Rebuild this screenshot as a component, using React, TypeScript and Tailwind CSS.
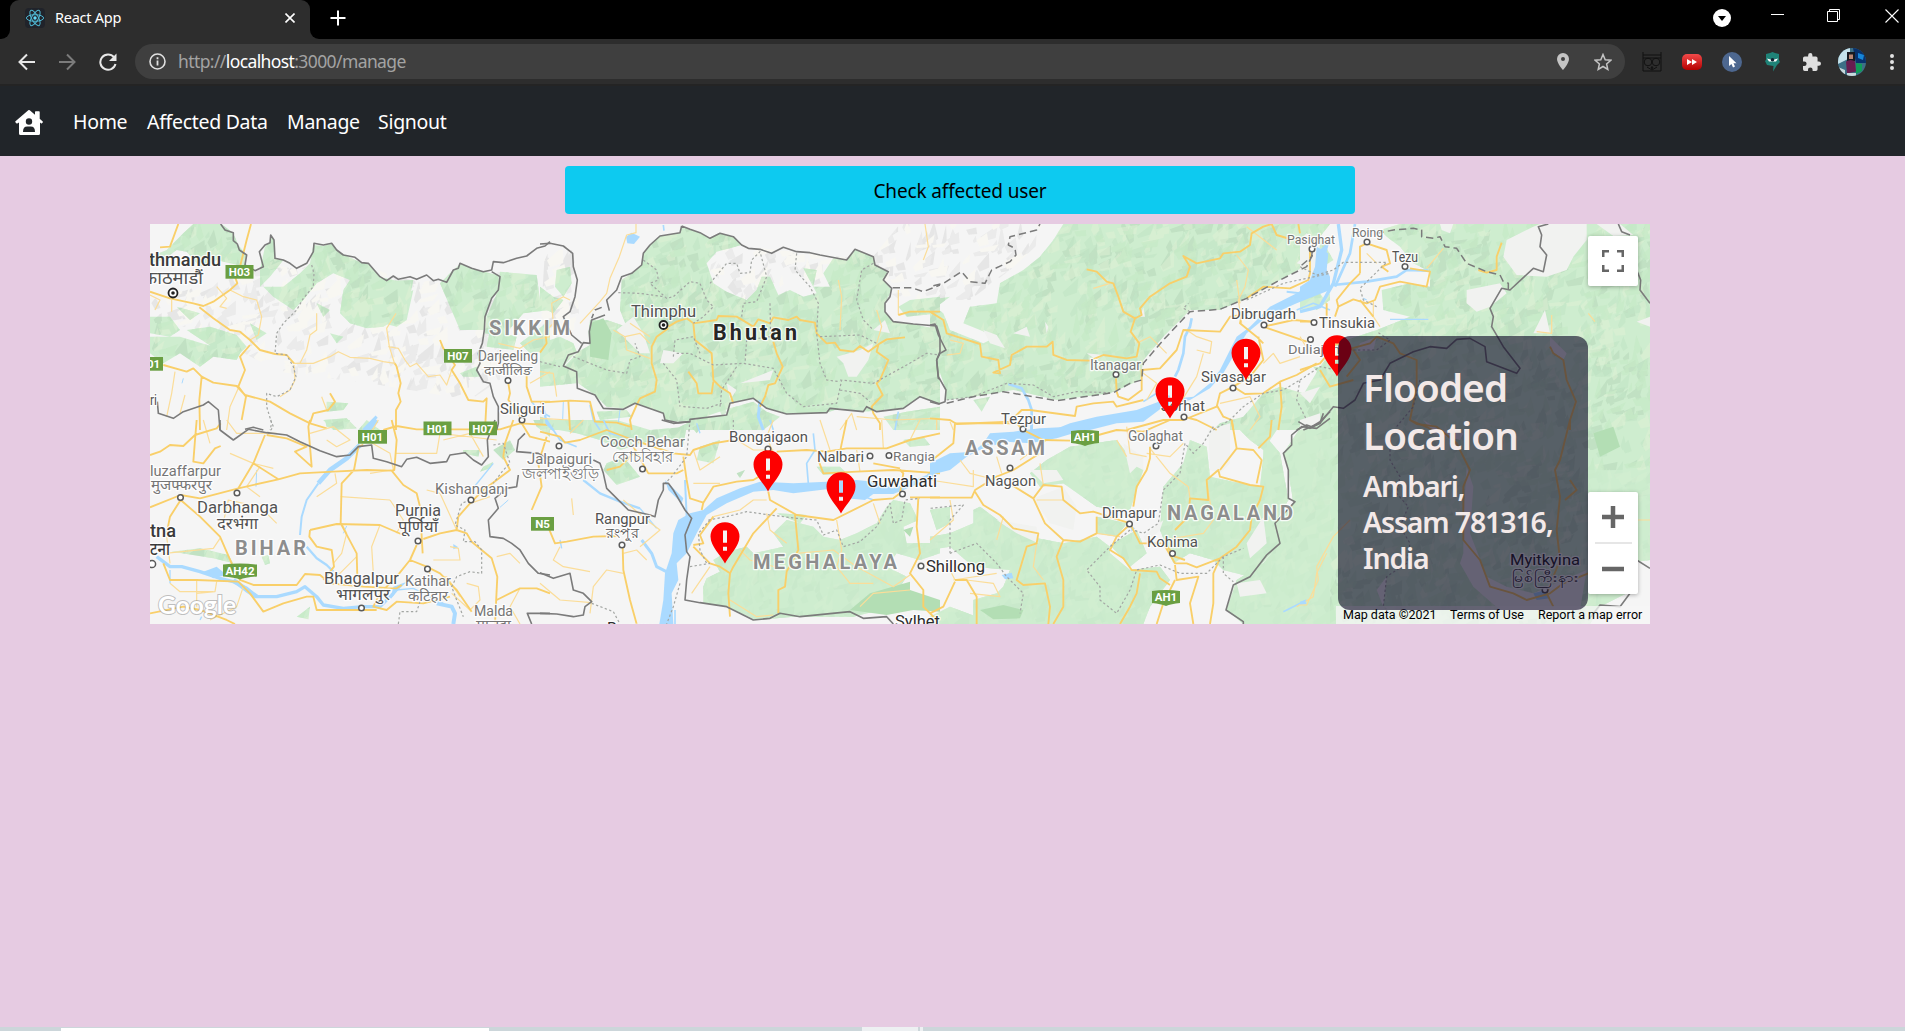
import React from "react";

type Tile = {
  x: number;
  y: number;
  green: string[];
  dark?: string[];
  pale?: string[];
  lake?: string[];
  stream?: [string, number][];
  road: string[];
  lane: string[];
  border: string[];
  dashed?: string[];
  dotted: string[];
};

// Every tile is drawn at three units per map pixel.
const tiles: Tile[] = [
  {
    x: 150, y: 220,
    green: [
      "M0 110L50 90 100 40 130 12H215L250 40 265 75 290 105 285 140 240 130 200 120 150 140 110 95 80 90 40 120 0 130z",
      "M0 290L60 290 90 330 60 350 0 340zM80 260L150 280 120 300zM110 330L180 320 260 345 290 380 270 400 200 390zM0 350L90 350 190 380 270 400 260 420 190 410 150 440 90 400 40 430 0 400z",
      "M330 150L345 80 360 68 362 50 372 60 375 115 400 120 360 170 330 200z",
      "M480 130L490 75 520 78 545 72 560 92 590 108 635 128 655 130 690 172 740 182 790 180 780 230 750 290 700 320 650 325 600 310 570 280 580 210 600 180 550 160 500 190 460 240 430 270 370 230 340 200 400 200 450 160z",
      "M790 210L770 300 740 320 700 310 720 250zM870 190L900 160 930 132 1000 155 1045 165 1048 210 1020 240 1000 330 930 330 900 260z",
      "M1050 155L1160 165 1170 240 1200 250V270L1120 280 1060 350 1005 340 1010 290 1045 210z",
      "M530 545L595 550 580 570 530 575zM520 600L590 595 620 625 550 630zM625 630L650 600 690 630zM1020 330L1100 350 1090 390 1010 380zM930 460L980 440 990 470 940 470zM1110 370L1200 300V390L1140 400z",
      "M500 250L540 270 520 290zM540 340L580 350 560 370zM300 310L350 340 320 360z",
    ],
    stream: [["M100 475L96 490", 3], ["M680 590L640 630", 9], ["M1145 545L1165 570 1200 590", 5]],
    road: [
      "M0 215L60 235 130 250 160 258 190 245 240 210 262 190 255 170 270 140 290 60 303 12",
      "M30 82L60 80 85 12",
      "M148 262L190 295 240 330 270 335 300 360 330 390 375 402 410 405 432 430",
      "M735 430L740 440 752 490 745 520 752 545 738 570V630",
      "M40 435L110 455 130 445 155 470 190 488 260 498 285 525 360 545 420 580 480 610 530 625",
      "M300 375L270 410 285 450 265 500 288 530 275 600",
      "M870 360L880 385 915 435 905 450 930 490 955 540 1000 545 1010 535 1005 630",
      "M155 470L148 540 150 630", "M480 610L490 580 535 570 555 545 540 520",
      "M1075 490L1080 520 1075 540 1100 570 1115 600", "M1130 460V500L1145 545H1200",
      "M700 630L740 618 800 628H1050L1110 610 1200 615",
    ],
    lane: [
      "M240 210L280 230 320 240 335 290 325 345 300 360", "M0 225L30 240 15 270", "M65 240V275", "M200 200L230 235 210 260 230 265",
      "M500 280V330L480 345 470 390 450 430", "M432 430L490 430 540 410 565 395 600 412 660 415 700 425 735 430",
      "M738 280L710 325 718 380 735 435", "M715 380L745 385 765 420 780 440 800 430 835 470 870 465 890 495 905 450",
      "M75 455L65 520 50 590", "M265 505L240 560 230 630", "M1045 370L1110 385 1150 360 1200 350", "M432 435L435 480 420 510 390 530",
      "M105 525L90 580", "M515 530L530 570", "M1140 490L1200 455",
    ],
    border: [
      "M212 12L225 30 250 38 250 62 262 72 268 90 290 105 285 135 315 152 340 140 328 95 345 75 360 68 362 45 372 60 375 115 400 120 420 130 440 145 470 130 490 95 492 70 520 75 545 70 560 90 580 105 615 112 635 128 655 130 690 170 710 182 730 168 745 178 780 170 800 178 830 165 850 182 865 178 890 187 910 150 925 145 930 130 965 145 1000 155 1025 150 1030 125 1060 128 1100 115 1130 108 1160 85 1185 78 1200 65",
      "M1025 155L1050 170 1045 210 1025 235 1005 290 1003 330 997 370 985 400 990 430 980 450 1000 485 1020 490 1030 530 1045 560 1045 610 1040 630",
      "M22 545L25 580 70 595 100 575 160 555 175 545 205 570 210 630", "M285 628L310 622 340 630",
    ],
    dotted: ["M485 135L492 160 490 200 460 235 440 270 400 310 380 340 375 400 410 405 430 440 438 470 420 510 380 530 350 520 350 560 365 610 360 630"],
  },
  {
    x: 150, y: 420,
    green: [
      "M65 395L150 385 235 405 250 430 190 415 110 402z", "M335 410L355 405 360 430 345 435z", "M440 590L480 560 475 598z",
      "M525 0H600L580 25 530 20zM940 90L990 90 985 110 940 100zM1030 90L1080 60 1095 90 1060 120zM1000 140L1030 125 1020 145 990 155zM1150 0H1200V50L1160 20z",
    ],
    lake: ["M910 372L925 382 910 388z", "M160 455L200 440 230 465 190 475z", "M720 540L730 500 770 485 745 510z"],
    stream: [
      ["M680 0L655 25 640 50", 16], ["M630 75L590 115 540 150 505 190", 14], ["M505 190L470 240 455 290 450 345", 6],
      ["M470 380L500 415 530 435 550 455", 7], ["M20 410L60 440 95 440 150 455 210 475 250 485 290 505 320 530 380 530 440 515 465 500 500 530 520 555 580 565 640 560 690 560 730 520", 10],
      ["M250 480L290 510 320 530", 14], ["M860 550L905 560 915 580 910 612", 12], ["M320 150L318 200", 3], ["M1030 130L965 210", 4], ["M1075 240L1050 262", 3],
      ["M590 318L580 340", 3], ["M60 450V490", 4], ["M740 510L790 505 880 550", 4], ["M150 600L155 590", 4],
    ],
    road: [
      "M0 105L30 95 60 75 100 78 135 45 200 25 212 10", "M140 0L135 60 130 125 160 130 195 85 212 78",
      "M345 45L310 130 265 205 150 235 92 225 0 262", "M350 45L410 55 470 80 435 95 485 140 475 20 480 0",
      "M310 130L385 178 450 160 550 155 650 150 725 152", "M385 178L265 205",
      "M640 75L625 80 612 150 575 190 572 310 620 400 622 470", "M725 0L740 60 733 150 725 152 760 195 800 220 810 260 818 400",
      "M92 240L60 290 50 340", "M92 240L150 290 210 350 245 430 270 480 310 495 440 495 465 462 510 465 540 490 640 500 740 505 755 495",
      "M480 330L560 312 690 315 760 345", "M480 330L478 350 500 380 545 390 552 440 520 480",
      "M820 357L870 340 920 330 925 290 960 250 1000 210 1080 150 1060 110 1065 70 1090 0",
      "M920 330L950 340 965 365 1025 415 1042 470 1035 612", "M800 375L780 420 740 470 690 520 670 560 710 570 740 545 820 550 900 530",
      "M780 420L830 440 870 460 920 510 965 575", "M40 430L60 480 140 480 265 485 300 520 340 575 400 550 470 530 490 530 500 570 620 570 680 570",
      "M0 580L100 560 150 570 230 600 255 612", "M1145 270L1175 200 1165 130 1190 50", "M1040 540L1110 505 1160 505 1200 520", "M1115 10L1140 50 1200 65",
    ],
    lane: [
      "M45 400L190 385 210 355", "M200 485L195 515 140 520", "M140 480V560", "M60 490L90 515 190 515", "M50 350L60 430", "M160 0L180 70", "M240 100L310 130 370 145",
      "M215 330L235 240 325 260 350 280 380 310", "M500 230L560 190 555 160", "M572 230L720 240", "M575 310L590 340 575 400 550 430", "M685 0L650 60 720 100 730 150", "M735 100H860L870 40 1040 60",
      "M690 315L665 380 670 460", "M660 160L725 150", "M850 420L930 420 925 385 900 380", "M920 330L870 220 830 210", "M880 60L960 40 1000 110", "M960 250L1020 230",
      "M280 500L260 560 180 600", "M1040 410L1080 400 1110 430", "M950 490L985 500 990 540 960 570 905 520", "M1110 505L1080 560 1110 612", "M830 440L850 480 890 470 930 530",
      "M480 40L550 20 600 60 560 80 530 60", "M330 140L290 200 330 230", "M720 240L760 300 740 340", "M620 410L560 470", "M230 0L260 40 380 40",
    ],
    border: [
      "M210 0V30L250 60 295 28 350 38 410 45 450 65 510 92 560 110 600 105 625 80 665 75 670 115 710 125 755 140 770 118 800 112 840 130 890 125 900 105 945 98 970 120 995 135 1015 110 1012 60 1035 0",
      "M1125 40L1105 60 1100 95 1165 100 1200 120", "M1105 165L1100 200 1070 205 1035 235 1045 265 1015 300 1020 350 1060 355 1085 370 1110 390 1135 430 1165 460 1200 465", "M1145 612L1132 580 1200 580",
    ],
    dotted: [
      "M960 240L935 250 915 315 945 330 940 365 975 365 995 390 995 460 960 455 920 470 905 500 920 540 940 590",
      "M745 612L750 575 800 575 810 545", "M1030 75L1060 70 1080 130 1060 150 1030 190", "M362 0L370 20 355 40",
    ],
  },
  {
    x: 540, y: 220,
    green: [
      "M425 20L420 38 360 48 330 75 310 100 305 135 275 160 245 180 240 270 260 320 200 300 150 300 145 340 150 375 115 395 75 438 110 460 115 490 165 525 200 560 250 565 285 550 370 580 375 600 415 605 560 585 570 550 640 535 680 565 740 582 860 578 900 565 970 575 1090 565 1140 530 1200 552V330L1120 312 1060 305 1035 275 1035 250 1055 210 1030 180 1045 155 1005 135 1000 110 945 88 920 120 880 115 850 160 870 200 820 200 830 150 790 145 830 220 790 230 750 210 715 225 690 170 665 170 650 210 620 240 560 215 520 190 500 130 530 95 605 75 580 50 540 40 510 55 480 38z",
      "M50 150L90 140 95 190 70 230 45 200zM0 200L40 230 70 240 40 280 0 260zM0 370L60 350 100 370 110 395 70 438 110 460V490L0 500z",
      "M450 605L570 565 640 545 680 575 720 590 670 630H400z", "M1030 590L1100 575 1200 560V630H1060zM170 575L260 570 275 590 180 600zM0 590L40 600 80 630H0z", "M1075 260L1110 240 1200 230V280L1100 290z",
    ],
    dark: ["M150 310L190 295 215 340 205 420 150 410z"],
    pale: ["M890 410L960 390 1000 370 985 420 950 470 925 470 910 430z", "M280 290L310 340 330 400 300 400 230 330z", "M370 390L430 400 400 430 360 430z", "M560 490L590 510 570 540zM1000 330L1035 300 1050 340zM600 490L700 450 690 480z"],
    lake: ["M258 50L275 38 300 50 282 72 262 70z"],
    stream: [["M370 15L372 32", 5], ["M660 540L655 590 670 630", 9], ["M150 555L160 600 180 630", 5], ["M12 570L20 610 40 630", 7], ["M70 545L68 600", 3], ["M1075 575L1065 630", 5], ["M240 570L235 610", 3], ["M690 600L700 630", 5]],
    road: [
      "M385 320L410 305 440 295 460 310 530 300 535 288 590 290 640 320 655 298 690 310 700 292 745 300 770 290 780 300 825 308 830 340 860 370 885 368 900 390 940 395 960 378 985 395 1020 370 1040 358 1095 352",
      "M385 325L350 350 335 380 335 430 350 480 345 515 300 535 290 555 270 600 275 630", "M460 310L465 360 515 400 520 480 540 500 570 520 580 550",
      "M445 455L470 490 475 520 515 520 520 485", "M700 365L710 400 728 440 705 490 685 495 675 530 660 560", "M1015 375L1010 395 1045 420 1020 480 1010 490 1028 525 995 560 1000 580 1020 610V630",
      "M0 398L20 370 15 330", "M0 548L90 542 150 545 165 605 230 608 270 620", "M85 542L90 630",
      "M1075 285L1110 275 1200 275",
    ],
    lane: [
      "M288 12V38L260 45 238 110 210 175 200 220 180 245 120 310", "M1155 12L1165 80 1150 120", "M220 330L255 350 260 390 330 415", "M255 350L300 340 330 370", "M0 455L40 460 50 530",
      "M900 330L905 230 895 180", "M1010 270L1025 320 1010 370", "M20 330L40 310 35 250 70 230 90 240", "M1075 285V210", "M270 310L330 350", "M900 630L935 580 950 630", "M950 590L1060 600 1190 595V630", "M0 595L90 600", "M730 440L720 460",
    ],
    border: [
      "M425 18L450 28 480 38 510 55 540 40 580 50 605 75 625 85 660 88 695 100 730 82 770 95 810 98 840 105 920 120 945 88 1000 110 1005 135 1045 155 1030 180 1055 205 1050 230 1035 250 1035 275 1060 305 1120 312 1190 318 1200 350 1200 395 1190 420 1195 475 1200 478",
      "M425 18L420 38 360 48 330 75 310 100 305 135 275 160 245 170 230 210 200 240 208 272",
      "M195 285L155 300 148 335 150 370 130 368 115 395 85 405 70 438 110 455 112 505 165 525 190 565 250 568 285 550 370 580 375 600 415 608 450 605 450 598 560 585 570 550 640 535 680 565 740 582 860 578 870 565 970 575 980 560 1010 575 1090 565 1140 530 1200 552",
      "M0 72L30 70 70 78 98 100 100 140 112 180 105 230 90 275 70 290 95 345 125 370",
    ],
    dashed: ["M185 262L165 270 155 295", "M1058 203H1115L1150 215 1200 195"],
    dotted: [
      "M310 120L350 150 355 180 330 190 380 235 400 230 450 185 480 190 500 240 520 260 490 290 460 310", "M235 218L300 220 370 230", "M510 190L560 130 590 130 600 160 630 158 635 120 660 95 680 170 650 245 610 250 605 290",
      "M770 100L765 150 810 200 835 250 830 340 840 430 860 480 900 485", "M1000 130L965 150 950 240 970 300 1000 330", "M100 410L200 450 260 460 270 420 300 410 285 370", "M370 430L410 480 420 560",
      "M400 410L405 360 460 350 480 400", "M410 400L450 400 520 435 610 430 700 445 740 520 790 560 890 550 905 480", "M690 350L620 360 615 430", "M840 350L960 345 1010 370", "M900 480L1000 490 1100 435 1160 400 1200 405", "M900 510L960 520 990 545", "M0 425L60 440", "M690 250L692 360", "M540 560L545 510 590 440", "M580 600 L580 630", "M430 560L500 565 545 550",
    ],
  },
  {
    x: 540, y: 420,
    green: [
      "M500 475L540 455 520 420 560 395 620 380 640 400 730 380 700 340 740 300 820 320 850 350 900 360 950 340 1010 310 1040 260 1060 240 1110 250 1135 300 1090 320 1100 370 1200 370V400L1140 420 1070 400 1040 440 1100 470 1080 500 1020 570 940 590 760 590 650 600 560 560 490 550 490 500z",
      "M0 0H230L330 30 440 20 430 75 400 80 370 50 240 90 180 60 110 40 0 20z", "M200 130L250 110 300 170 230 195 190 150z", "M480 80L540 60 520 130 470 120zM590 160L615 150 600 175zM830 140L900 140 920 160 850 165zM440 0H500L470 40z", "M1090 60L1150 50 1170 75 1110 80zM710 280L800 285 780 310z",
    ],
    dark: ["M930 570L990 520 1110 485 1110 510 1200 540V575L1120 570 1040 585z", "M1090 330L1120 320 1110 350z"],
    lake: [
      "M1200 120L1160 165 1060 205 1000 185 950 180 860 185 760 190 660 185 600 205 530 235 490 270 450 280 415 300 400 340 395 400 375 460 370 540 358 612H400L395 520 415 480 410 430 440 400 470 340 500 285 560 250 640 215 700 210 760 220 860 208 920 235 975 240 1000 222 1060 222 1150 185 1200 160z",
      "M375 180L430 235 425 250 385 210z",
    ],
    stream: [
      ["M130 180L180 220 240 245 300 265", 7], ["M305 360L335 400 350 440 385 458", 9], ["M435 180L440 290", 6], ["M820 40L825 90 800 130 805 190", 5], ["M20 0L60 60 110 80", 5], ["M190 0L210 40 290 60", 5],
      ["M300 265L350 325", 4], ["M60 360L65 385", 4], ["M470 10L480 40", 4], ["M900 230L960 225 1000 240", 5], ["M405 570V612", 5],
    ],
    road: [
      "M20 310L45 370 80 365 160 350 235 348", "M248 380L250 450 270 540 290 612", "M0 35L60 50 75 68 120 60 200 30 280 60 400 100 450 105 460 90 520 70 580 60",
      "M280 80L325 160 410 160 430 150", "M430 110L440 180 450 235 490 248 520 200 590 185 640 180 690 150", "M490 248L485 270", "M685 215L690 240 770 285 880 300 1000 240 1060 235 1080 220 1090 160 1080 150",
      "M710 265L640 340 580 440 570 460 565 520 570 590", "M765 285L775 390 740 455 735 500 715 510V580", "M710 95L800 90 860 95 920 85 1040 85 1110 60 1200 40", "M900 95L920 0",
      "M835 120L850 160 950 155 1060 150 1200 160", "M1135 235L1130 320 1140 400 1110 460 1150 510 1150 560 1190 600", "M1110 232H1200", "M460 375L490 370 480 345 520 290", "M460 380L510 430 540 440 570 460",
      "M200 150L240 140 290 90", "M1000 130L1080 145",
    ],
    lane: [
      "M250 460L200 450 160 500 150 580", "M0 490L60 540 155 548", "M250 400L290 390 320 420", "M95 235L100 285", "M60 380L40 420 70 440 150 455", "M520 290L600 270 640 240 680 240", "M680 280L690 330 740 370", "M600 390L630 420 740 450",
      "M460 190L540 190", "M460 90L480 150 540 110", "M840 0L870 90", "M1025 0L1030 85", "M1110 60L1140 0", "M950 90L960 155", "M770 400L880 390 950 440 1060 500 1110 465", "M890 300L905 390 890 440 930 490 1000 490", "M1000 250L1020 310", "M1110 510L1000 520 960 560",
      "M455 520L510 440", "M570 540L650 590 700 585", "M250 240L320 300 360 330 300 380", "M590 60L640 90 700 90", "M700 100L680 50 700 0", "M90 40L130 0",
    ],
    border: [
      "M365 0L400 10 450 5", "M160 120L180 130 190 160 200 205 225 230 265 270 330 285 345 290 355 240 370 210 370 190 385 190 400 210 435 270 455 295 435 345 440 395 450 410 440 480 435 540 480 548 560 560 640 600 690 595 720 580 780 590 930 575 970 595 1040 590 1060 612",
      "M0 458L40 475 90 460 100 510 130 520 155 545 135 560 130 585 100 590 50 582 0 580",
    ],
    dotted: [
      "M505 300L560 290 620 275 690 285 770 295 830 300 850 345 890 330 910 380 960 365 1010 320 1050 250 1060 310 1085 300 1095 240 1140 235", "M420 490L400 560 380 612", "M155 550L220 575 240 612", "M450 440L510 430", "M450 0L440 110 395 170 375 190", "M510 300L475 340 480 390 500 430",
    ],
  },
  {
    x: 930, y: 220,
    green: [
      "M400 12H1110L1150 60 1140 130 1050 180 950 235 870 270 780 270 700 350 640 420 630 480 540 520 380 540 250 510 130 530 50 540 45 500 20 430 0 440V250L40 280 60 330 160 370 200 350 100 310 120 260 200 250 210 190 280 150 330 110 370 60z",
      "M1200 445L1150 440 1180 480 1120 520 1050 500 1000 520 940 590 870 610 850 630H1200z", "M130 540L180 530 155 575z", "M0 240L60 230 20 260zM1150 260L1200 220V240L1160 270z",
    ],
    pale: ["M160 330L200 345 225 385 180 370zM250 340L290 320 300 350zM345 305L355 320 350 340zM640 262L645 290 630 290z", "M1100 130L1140 90 1140 140zM470 400L520 405 500 420z"],
    lake: ["M1200 60L1170 90 1165 130 1175 170 1100 220 1060 240 1020 260 960 320 920 350 900 390 870 450 840 490 790 530 700 540 620 570 500 590 420 610 370 630H480L560 610 640 605 700 560 780 540 840 505 880 460 950 340 1010 290 1100 250 1200 210V170L1180 130z"],
    stream: [["M785 295L780 320 765 350 760 400 745 450 735 470", 8], ["M640 545L680 520 720 530", 5], ["M235 492L275 505 295 540 305 570V630", 8], ["M1200 270L1150 250 1100 270", 5], ["M1070 215L1110 220", 6]],
    road: [
      "M0 275L40 300 50 340 80 350 150 372 155 410 205 420 210 460 190 458 240 435 245 405 290 380 350 380 368 365 370 405 410 420 480 422 520 405 590 415 620 410 628 370 602 335 615 295 580 275 565 230 550 190 530 185 500 155 470 148",
      "M615 295L635 285 630 265 660 230 720 190 770 170 780 140 760 108 800 130 870 115 880 100 930 95 960 75 965 40 1000 20 1025 12 1040 45 1090 60", "M558 475L560 515",
      "M560 515L565 530 595 540 635 510 635 450 690 445 740 390 760 330 870 335 900 290 935 285", "M0 595L60 600 80 612 240 605 275 570 300 570 435 588 440 560 490 550 550 545 560 560 640 540", "M935 285L930 310 980 350 1000 370",
      "M1000 320L1090 300 1150 305", "M1000 320L1130 365", "M950 235L1000 200 1080 205 1135 180 1140 160V90", "M590 630L700 600 760 600 860 560 870 520 910 500 945 522 1000 520 1050 485 1100 465 1160 430", "M985 350L1000 420 960 470 910 500",
      "M860 555L880 590 905 600 910 630", "M1050 485L1055 560 1045 630", "M1190 250V300", "M1105 12L1110 40", "M760 590L800 600 860 630",
    ],
    lane: [
      "M490 205L540 190", "M920 105L955 150 945 200 925 240 935 310", "M620 370L660 350 710 400", "M770 330L800 350 845 365 840 400 800 390", "M60 360L100 370 90 400 50 405", "M60 605L70 630", "M820 400L800 470 750 550", "M1000 430L1030 400 1050 430 1110 410", "M870 550L960 530 990 590 960 630", "M640 460L680 490 650 540", "M950 20L1040 90", "M920 180L930 250",
    ],
    border: ["M0 315L15 312 25 345 48 390 30 400 20 420 25 470 48 510 45 545 25 552 0 545", "M1100 630L1130 615 1145 620 1170 605 1200 575"],
    dashed: [
      "M10 197L40 190 95 155 120 185 165 190 185 150 240 125 258 105 255 85 235 75 240 50 320 30 330 12", "M50 550L130 530 220 515 380 542 550 518 600 490 635 480 640 430 700 360 780 275 870 268 950 235 1050 180 1130 140 1150 100",
    ],
    dotted: ["M50 540L130 530 230 490 310 495 370 530 440 515 540 518", "M780 275L760 265 775 250", "M950 240L1060 190 1200 160", "M850 630L900 600 940 560 1000 520 1060 510 1110 480 1100 540 1130 600"],
  },
  {
    x: 930, y: 420,
    green: [
      "M300 160L350 120 420 80 560 60 600 110 640 150 600 270 560 270 500 260 400 190 330 200z",
      "M150 260L230 320 300 350 400 370 500 350 540 380 540 400 600 450 690 440 720 480 660 560 640 612H130V540L200 520 220 500 240 450 130 440 60 380 0 390V350L60 340 130 310 130 270z",
      "M780 60L830 80 840 170 930 190 990 200 1000 110 1000 40 1050 100 1075 240 1040 300 1050 370 960 470 880 450 850 420 780 400 730 430 690 330 700 200 760 130z", "M500 290L590 310 560 350 500 340z", "M900 0H1060L1000 90 960 60z",
      "M1060 100L1120 10 1200 0V612H940L890 570 920 480 1000 430 1050 370 1035 310 1090 250 1075 150z", "M540 375L620 330 650 400 600 440z", "M0 590L60 560 140 590V612H0z", "M0 270L60 260 60 310 20 330z",
    ],
    dark: ["M150 570L220 555 280 570 270 595 190 598z"],
    pale: ["M580 70L640 110 640 150 620 140 600 160zM300 150L380 150 400 180 340 190zM310 235L400 200 440 260 430 330 360 310zM920 490L990 480 1010 520 930 530z", "M640 350L700 300 690 330 650 370zM835 30L900 10 900 130 870 160 840 150zM950 370L1000 290 1010 370 960 415z", "M200 300L320 320 325 370 260 340z"],
    lake: ["M0 130L60 100 130 95 160 70 180 40 250 35 330 25 420 20 480 0H560L480 25 380 55 300 70 230 65 160 85 110 110 60 150 0 165z", "M215 465L245 458 250 475 225 478z", "M600 315L615 325 605 335z"],
    stream: [["M305 0V40", 8], ["M1130 540L1060 575", 5], ["M75 100L60 140", 4]],
    road: [
      "M75 10H260L280 30 300 40 340 60 420 62", "M505 45L560 30 640 35 720 0", "M75 10L70 70 0 125", "M0 233H125L135 210 200 170 250 150 330 100", "M135 215L160 255 210 285 250 325 325 340 320 370 290 380 260 480 280 495 345 490 360 560 355 612",
      "M245 195L310 235 340 195 395 200 400 240 450 280 490 275 600 310", "M310 235L345 310 400 360 380 410 400 480 400 560 370 612", "M400 360L450 365 500 340 500 290", "M660 80V115L650 150 620 200 610 260", "M598 315L560 350 540 390 580 415 605 450 680 455 690 475 720 495",
      "M605 320L630 370 700 370 735 430 770 430 800 442 870 415 920 380 960 330 965 290 990 240 1000 200 960 195 870 170 865 150 830 180 835 240 780 235 775 290 735 330", "M870 150L920 85 970 90 995 120 980 190", "M920 85L905 0", "M985 85L1020 50 1025 0",
      "M735 435L740 480 805 470 780 550 790 612", "M735 480L700 550 680 612", "M870 415L850 460V550L840 612", "M630 460L620 520 600 560 570 612", "M75 480L110 480 140 530 140 612", "M75 485L40 560 0 580", "M705 370L735 410 765 420",
    ],
    lane: [
      "M1190 400L1160 460 1150 530 1100 560", "M660 85L720 160 775 200 780 235", "M90 120L120 160 200 180", "M0 180L130 200 130 150", "M200 110L215 160", "M590 20L600 100 650 110", "M650 100L720 110 760 70", "M320 240L400 240", "M60 240L70 300 0 360", "M110 480L190 490 210 530 120 520", "M75 480L50 430", "M320 370L310 440 340 480", "M220 290L200 360", "M700 360L820 340 850 300 830 190", "M500 340L570 350", "M560 60L590 110", "M350 60L270 120", "M340 195L330 130", "M200 460L70 480",
    ],
    border: ["M1200 -5L1160 25 1115 20 1085 45 1085 75 1060 100 1075 150 1075 235 1095 245 1035 310 1050 370 1010 405 960 470 910 495 888 570 940 605V612"],
    dotted: [
      "M850 20L820 70 790 100 765 70 750 160 700 210 685 310 640 340 610 330", "M600 330L540 380 470 450 510 500 510 540 560 580 600 510 620 450 690 435 750 460 830 460 880 410 940 385", "M880 410V460L910 485", "M60 400V300L100 255 0 265", "M60 400L140 370 200 430 230 470 280 520 270 580",
    ],
  },
  {
    x: 1300, y: 220,
    green: [
      "M240 30L300 12H1050V630H0V540L60 440 110 370 230 330 330 290 250 270 245 210 330 190 390 200 390 155 340 130 300 80 260 50z", "M0 12H90L60 50 100 120 40 160 0 170z", "M0 230L60 220 80 250 0 270z",
    ],
    pale: [
      "M620 60L700 20 720 12H860V60L820 110 800 150 740 170 650 165 610 110z", "M500 210L600 190 620 220 570 260 530 275 500 250z", "M735 270L750 340 700 340z", "M890 12H960L1000 45 940 48z", "M1010 305L1050 290V320z", "M0 60L20 40 60 70 50 160 0 180z", "M420 12H460L450 40 425 30z",
      "M750 350L800 400 790 420 750 390z", "M180 370L230 350 220 390 170 395zM0 520L60 500 30 550z",
    ],
    lake: ["M50 80L85 100 80 150 60 200 0 240V200L30 180 45 140z"],
    stream: [["M115 12L125 90 100 190 60 260 0 275", 10], ["M165 12L150 100 105 200", 8], ["M100 195L200 185 290 170 320 150 385 152", 8], ["M270 298H385", 4], ["M190 235L200 240", 4]],
    road: [
      "M180 160V80L200 70 260 90 270 130 245 140 265 155", "M105 290L115 260 160 238 200 250 225 240 240 200 300 185 380 200 390 155 330 145", "M115 260L110 240 150 190 180 160", "M0 305L40 305", "M180 240L220 290", "M535 150L560 158 590 150 590 110 605 68",
      "M750 380L760 400 790 420 800 480 828 545 810 600V630", "M155 385L210 370 230 350 280 370 300 400 350 420 350 500 330 600 400 630", "M60 450L90 500 160 480", "M0 450L60 430 110 370", "M110 370L160 390 180 420 140 470",
    ],
    lane: ["M380 145L430 85", "M865 280L885 305", "M755 285L755 340 710 335", "M200 100L230 130", "M220 240V290L240 320", "M0 350L30 400"],
    border: [
      "M745 12L715 20 725 45 720 80 740 105 730 155 700 145 630 210 605 205 570 265 580 290 575 320 610 380 660 445 650 460 560 425 555 380 510 355 470 358 440 385 390 380 340 395 270 430 240 480 190 490 165 540 130 565 100 560 60 610 10 630", "M955 12L965 35 990 45", "M1010 150L1022 180 1020 210 1050 250",
    ],
    dashed: ["M230 40L280 30 340 25 365 30 365 50 400 55 420 50 435 80 470 85 500 130 560 155 600 165 610 185 625 190 625 210", "M40 60L35 110 0 140"],
    dotted: ["M0 140L50 165 100 150 130 127H260L180 205 190 240 230 260", "M0 480L60 440 110 450", "M160 390L230 390 270 360 230 335", "M360 480L340 560 290 620"],
  },
  {
    x: 1300, y: 420,
    green: ["M0 0H1050V420L1010 425 980 520 900 560 870 612H0z"],
    pale: ["M500 140L520 200 510 340 560 470 620 500 700 520 860 450 840 570H600L520 500 480 430 490 400 490 300z", "M0 30L60 10 60 -20 0 0z", "M370 0L420 30 490 40 480 60 400 40z", "M230 510L260 470 250 560z"],
    dark: ["M880 40L940 20 960 80 900 110z"],
    lake: ["M700 520L740 510 750 535 710 540z", "M0 545L15 540 20 552 0 555z"],
    road: ["M330 0L350 12 410 20 470 70 510 150 490 200 490 360 540 420 570 500 640 520 680 540 750 520 790 490 865 460", "M810 0L780 120 765 150 780 230 770 330 780 420 740 520", "M740 520L760 560", "M810 180L830 210 795 240"],
    lane: ["M150 300L100 350 50 440 55 480 20 555 0 555", "M1050 300H1010"],
    border: ["M1010 420L1050 445", "M865 600L900 555 960 560 990 520 1010 460", "M-5 5L30 25 60 10 70 -20"],
    dotted: ["M270 60V120L300 170 290 220 325 260 300 320 330 370 320 430 260 470 250 560 300 600"],
  },
];

type Label = [string, number, number, number, number, string?];

// text, left, baseline, width, size, tone
const labels: Label[] = [
  ["thmandu", 149, 266, 72, 18, "b"], ["काठमाडौं", 143, 284, 60, 17], ["ri", 150, 405, 7, 15], ["Darjeeling", 478, 361, 60, 15, "g"], ["दार्जीलिङ", 484, 375, 48, 13, "g"],
  ["Siliguri", 500, 414, 45, 15], ["luzaffarpur", 150, 476, 71, 15.5, "g"], ["मुजफ्फरपुर", 151, 490, 61, 14, "g"], ["Darbhanga", 197, 512.5, 81, 17], ["दरभंगा", 217, 528.5, 41, 16],
  ["tna", 150, 537, 26, 18, "b"], ["टना", 150, 555, 20, 17, "b"], ["Purnia", 395, 516, 46, 16.5], ["पूर्णियाँ", 398, 531.5, 40, 16], ["Kishanganj", 435, 494, 73, 15.5, "g"],
  ["Jalpaiguri", 527, 464, 65, 15, "g"], ["জলপাইগুড়ি", 522, 478.5, 77, 15, "g"], ["Bhagalpur", 324, 583.5, 75, 17], ["भागलपुर", 336, 599.5, 54, 16], ["Katihar", 405, 586, 46, 15.5, "g"], ["कटिहार", 408, 601, 40, 15, "g"],
  ["Malda", 474, 615.7, 39, 15.5, "g"], ["मालदा", 476, 630, 35, 14, "g"], ["Thimphu", 631, 316.7, 65, 16.5], ["Cooch Behar", 600, 447, 85, 15.5, "g"], ["কোচবিহার", 612, 462, 61, 15, "g"],
  ["Bongaigaon", 729, 442, 79, 15.5], ["Nalbari", 817, 461.5, 47, 15.5], ["Rangia", 893, 460.5, 42, 13.5, "g"], ["Guwahati", 867, 487, 70, 17, "k"], ["Rangpur", 595, 524, 55, 15.5], ["রংপুর", 606, 538, 33, 14],
  ["Shillong", 926, 572, 59, 17, "k"], ["Sylhet", 895, 627, 45, 17, "k"], ["Bogura", 607, 633.5, 50, 16, "k"], ["Pasighat", 1287, 243.5, 48, 13.5, "g"], ["Dibrugarh", 1231, 319, 65, 15.5], ["Tinsukia", 1319, 328, 56, 15.5],
  ["Duliajan", 1288, 354, 52, 13.5, "g"], ["Itanagar", 1090, 369.500, 51, 14, "g"], ["Sivasagar", 1201, 381.5, 65, 15.5], ["Jorhat", 1161, 411, 44, 15.5], ["Tezpur", 1001, 423.5, 45, 15.5], ["Golaghat", 1128, 440.500, 55, 14, "g"],
  ["Nagaon", 985, 486, 51, 15.5], ["Dimapur", 1102, 517.5, 55, 15.5], ["Kohima", 1147, 547, 51, 15.5], ["Roing", 1352, 237, 31, 13.5, "g"], ["Tezu", 1392, 261.5, 26, 14], ["Myitkyina", 1510, 564.5, 70, 15.5, "k"], ["မြစ်ကြီးနား", 1512, 582, 66, 14, "k"],
];

const regions: Label[] = [
  ["SIKKIM", 489, 335, 81, 20], ["BIHAR", 235, 554.7, 71, 20], ["MEGHALAYA", 753, 569, 144, 20], ["ASSAM", 965, 455, 80, 20], ["NAGALAND", 1167, 520, 126, 20],
];

const towns = [
  [508, 380.5], [522, 420], [180.5, 497.5], [237, 493], [418, 541], [471, 500], [559, 446], [361.5, 608], [427.5, 569], [642.5, 469], [768, 449], [870, 456], [889, 455.5], [902.5, 494], [622, 545], [921, 566], [1312, 249],
  [1264, 325], [1314, 322.5], [1310.5, 339.5], [1116, 374.5], [1233, 388], [1184, 417], [1023, 429], [1156, 446], [1010, 468], [1129.5, 524], [1172.5, 553.5], [1367, 242], [1405, 266.5], [1545, 590],
];

const badges: [string, number, number, number, boolean][] = [
  ["H03", 225.5, 265, 28, false], ["01", 144, 357, 19, false], ["H07", 444, 349, 28, false], ["H01", 423.5, 421.5, 28, false], ["H07", 469, 421.5, 28, false], ["H01", 358, 430, 29, false], ["N5", 531, 517, 23, false],
  ["AH42", 223, 563.5, 34, true], ["AH1", 1071, 430, 28, true], ["AH1", 1152, 590, 28, true],
];

const pins = [[768, 491.5], [841, 513.5], [725, 563.5], [1246, 380], [1170, 418.5], [1337, 376.5]];

const toneFill: Record<string, string> = { b: "#3a3a3a", g: "#757575", k: "#2d2d2d" };

function makeFacets(count: number) {
  let seed = 7;
  const rnd = () => {
    seed = (seed * 16807) % 2147483647;
    return seed / 2147483647;
  };
  const out = ["", "", "", ""];
  for (let i = 0; i < count; i++) {
    const x = 150 + rnd() * 1500;
    const y = 224 + rnd() * 400;
    const len = 6 + rnd() * 16;
    const a = -0.75 + (rnd() - 0.5) * 1.3;
    const w = 2 + rnd() * 5;
    const dx = Math.cos(a) * len;
    const dy = Math.sin(a) * len;
    const f = (n: number) => n.toFixed(1);
    out[i % 4] += `M${f(x)} ${f(y)}L${f(x + dx)} ${f(y + dy)} ${f(x + dx * 0.6 + w)} ${f(y + dy * 0.3 + w)} ${f(x + w * 0.5)} ${f(y + w)}z`;
  }
  return out;
}

const facets = makeFacets(7600);

function Layer({ children }: { children: (t: Tile) => React.ReactNode }) {
  return (
    <>
      {tiles.map((t) => (
        <g key={`${t.x}-${t.y}`} transform={`translate(${t.x} ${t.y}) scale(.33333)`}>
          {children(t)}
        </g>
      ))}
    </>
  );
}

function MapCanvas() {
  return (
    <svg viewBox="150 224 1500 400" className="block h-[400px] w-[1500px]" style={{ fontFamily: 'Roboto, "Noto Sans", sans-serif' }}>
      <defs>
        <clipPath id="woods">
          {tiles.map((t) => t.green.map((d, i) => <path key={`${t.x}-${t.y}-${i}`} d={d} transform={`translate(${t.x} ${t.y}) scale(.33333)`} />))}
        </clipPath>
        <clipPath id="hills">
          <path d="M150 300L230 278 260 262 300 270 330 250 390 275 420 282 500 272 500 380 470 400 380 385 280 372 200 330 150 320zM715 245L760 248 870 260 900 224H1060L1010 270 970 300 900 300 860 270 800 290 740 300 710 270zM1500 224H1600V270L1530 280 1500 320 1460 300zM545 250L575 250 580 330 560 345 540 330z" />
        </clipPath>
        <filter id="relief"><feGaussianBlur stdDeviation=".45" /></filter>
      </defs>
      <rect x="150" y="224" width="1500" height="400" fill="#f5f5f5" />
      <g clipPath="url(#hills)" filter="url(#relief)">
        <path d={facets[0]} fill="#dedede" opacity=".65" />
        <path d={facets[1]} fill="#ebebeb" />
        <path d={facets[2]} fill="#f8f7f2" />
      </g>
      <Layer>{(t) => <path d={t.green.join("")} fill="#ceedcf" />}</Layer>
      <g clipPath="url(#woods)" filter="url(#relief)">
        <path d={facets[0]} fill="#b3d6b7" opacity=".5" />
        <path d={facets[1]} fill="#c2e4c4" opacity=".6" />
        <path d={facets[2]} fill="#dff2d6" opacity=".5" />
        <path d={facets[3]} fill="#c6eac6" opacity=".7" />
      </g>
      <path d="M900 425H1330V624H690V540zM1588 470H1650V624H1588z" fill="#ceedcf" opacity=".65" clipPath="url(#woods)" />
      <Layer>
        {(t) => (
          <>
            <path d={(t.dark ?? []).join("")} fill="#b3deb4" />
            <path d={(t.pale ?? []).join("")} fill="#f1f2f0" />
          </>
        )}
      </Layer>
      <Layer>
        {(t) => (
          <g fill="none" strokeLinejoin="round">
            <path d={(t.lake ?? []).join("")} fill="#aadaff" />
            {(t.stream ?? []).map(([d, w]) => <path key={d} d={d} stroke="#aadaff" strokeWidth={w} />)}
            <path d={t.lane.join("")} stroke="#fbdd99" strokeWidth="3.6" />
            <path d={t.road.join("")} stroke="#f9cf69" strokeWidth="5.6" />
          </g>
        )}
      </Layer>
      <Layer>
        {(t) => (
          <g fill="none" stroke="#7b7b7b" strokeLinejoin="round">
            <path d={t.dotted.join("")} stroke="#a3a6a3" strokeWidth="3.6" strokeDasharray="7 7" />
            <path d={(t.dashed ?? []).join("")} strokeWidth="4.5" strokeDasharray="22 12" />
            <path d={t.border.join("")} strokeWidth="4.8" />
          </g>
        )}
      </Layer>
      <g fill="#fff" stroke="#5a5a5a" strokeWidth="1.5">
        {towns.map(([x, y]) => <circle key={`${x}-${y}`} cx={x} cy={y} r="2.8" />)}
        <circle cx="152" cy="564" r="3.6" />
        {[[173, 293, 4.5], [663.5, 325, 4]].map(([x, y, r]) => (
          <g key={x}>
            <circle cx={x} cy={y} r={r} stroke="#222" strokeWidth="1.8" />
            <circle cx={x} cy={y} r="1.8" fill="#222" stroke="none" />
          </g>
        ))}
      </g>
      {badges.map(([t, x, y, w, curved]) => (
        <g key={`${t}-${x}`}>
          {curved ? (
            <path d={`M${x} ${y + 1}Q${x + w / 2} ${y - 1} ${x + w} ${y + 1}V${y + 13}Q${x + w / 2 + 5} ${y + 14} ${x + w / 2} ${y + 16}Q${x + w / 2 - 5} ${y + 14} ${x} ${y + 13}z`} fill="#6a9f42" />
          ) : (
            <rect x={x} y={y} width={w} height="13.7" fill="#6a9f42" />
          )}
          <text x={x + w / 2} y={y + 11.2} fontSize="11.5" fontWeight="700" fill="#fff" textAnchor="middle">{t}</text>
        </g>
      ))}
      <g stroke="#fff" strokeOpacity=".85" strokeWidth="2.6" strokeLinejoin="round" style={{ paintOrder: "stroke" }}>
        {labels.map(([t, x, y, w, s, tone]) => (
          <text key={t} x={x} y={y} fontSize={s} textLength={w} lengthAdjust="spacingAndGlyphs" fontWeight={tone === "b" ? 500 : 400} fill={toneFill[tone ?? ""] ?? "#525252"}>{t}</text>
        ))}
        {regions.map(([t, x, y, w, s]) => (
          <text key={t} x={x} y={y} fontSize={s} textLength={w} fontWeight="700" fill="#8d8d8d">{t}</text>
        ))}
        <text x="713" y="339.700" fontSize="21.5" textLength="84" fontWeight="700" fill="#262626">Bhutan</text>
      </g>
      <text x="158" y="614" fontSize="25.5" textLength="78" lengthAdjust="spacingAndGlyphs" fontWeight="700" fill="#fff" stroke="#8a8a8a" strokeOpacity=".5" strokeWidth="2" style={{ paintOrder: "stroke" }} fontFamily="Lato, sans-serif">Google</text>
      {pins.map(([x, y]) => (
        <path key={x} transform={`translate(${x} ${y})`} d="M0 0C-4-8-14.5-17-14.5-27A14.5 14.3 0 0 1 14.5-27C14.5-17 4-8 0 0ZM-2-33v12.3h4v-12.3zM-2-16.7v4h4v-4z" fill="#fe0000" fillRule="evenodd" />
      ))}
    </svg>
  );
}

function ReactMark() {
  return (
    <svg viewBox="0 0 20 20" className="size-5 rounded-sm bg-[#20232a]">
      <g fill="none" stroke="#4fb8d3" strokeWidth="1">
        <ellipse cx="10" cy="10" rx="8.6" ry="3.3" />
        <ellipse cx="10" cy="10" rx="8.6" ry="3.3" transform="rotate(60 10 10)" />
        <ellipse cx="10" cy="10" rx="8.6" ry="3.3" transform="rotate(120 10 10)" />
      </g>
      <circle cx="10" cy="10" r="1.7" fill="#61dafb" />
    </svg>
  );
}

function TabStrip() {
  return (
    <div className="flex h-[39px] bg-black">
      <div className="flex w-2.5 items-end bg-[#2d2d2d]"><div className="size-full rounded-br-[9px] bg-black" /></div>
      <div className="flex w-[300px] items-center rounded-t-[9px] bg-[#2d2d2d] pr-[15px] pb-[3px] pl-[15px]">
        <ReactMark />
        <span className="-mt-px ml-2.5 flex-1 text-[14.5px] tracking-[-0.25px] text-white">React App</span>
        <svg viewBox="0 0 10 10" className="size-[10px]"><path d="M.5 .5l9 9M9.5 .5l-9 9" stroke="#fff" strokeWidth="1.6" /></svg>
      </div>
      <div className="w-2.5 bg-[#2d2d2d]"><div className="size-full rounded-bl-[9px] bg-black" /></div>
      <svg viewBox="0 0 16 16" className="mt-[10px] ml-[10px] size-4"><path d="M8 .5v15M.5 8h15" stroke="#fff" strokeWidth="2" /></svg>
      <div className="flex-1" />
      <svg viewBox="0 0 18 18" className="mt-[9px] size-[18px]"><circle cx="9" cy="9" r="9" fill="#fff" /><path d="M5 7h8l-4 5z" fill="#000" /></svg>
      <svg viewBox="0 0 13 13" className="mt-2 ml-10 size-[13px]"><path d="M0 6.5h13" stroke="#fff" /></svg>
      <svg viewBox="0 0 14 14" className="mt-[9px] ml-[43px] size-[14px]"><path d="M.5 2.5h10v10h-10zM2.5 2.5v-2h10v10h-2" fill="none" stroke="#fff" /></svg>
      <svg viewBox="0 0 14 14" className="mt-[9px] mr-[6px] ml-11 size-[14px]"><path d="M.5 .5l13 13M13.5 .5l-13 13" stroke="#fff" strokeWidth="1.1" /></svg>
    </div>
  );
}

function Toolbar() {
  return (
    <div className="flex h-[47px] items-center border-b-2 border-[#242424] bg-[#2d2d2d]">
      <svg viewBox="0 0 18 18" className="ml-[18px] size-[18px]"><path d="M17 9H2M9 1.5L1.5 9 9 16.5" fill="none" stroke="#e8e8e8" strokeWidth="2" /></svg>
      <svg viewBox="0 0 18 18" className="ml-[22px] size-[18px]"><path d="M1 9h15M9 1.5L16.5 9 9 16.5" fill="none" stroke="#7b7b7b" strokeWidth="2" /></svg>
      <svg viewBox="0 0 18 18" className="ml-[23px] size-[18px]"><path d="M15 4.2A7.7 7.7 0 1 0 16.500 11" fill="none" stroke="#e8e8e8" strokeWidth="2" /><path d="M17.500 .5v7.5H10z" fill="#e8e8e8" /></svg>
      <div className="ml-[18px] flex h-[35px] w-[1490px] shrink-0 items-center rounded-full bg-[#3f3f3f] pl-[14px]">
        <svg viewBox="0 0 17 17" className="size-[17px]"><circle cx="8.5" cy="8.5" r="7.5" fill="none" stroke="#e0e0e0" strokeWidth="1.6" /><path d="M8.5 7.4v5M8.5 4.2v2" stroke="#e0e0e0" strokeWidth="1.8" /></svg>
        <span className="ml-3 flex-1 text-[17.5px] tracking-[-0.6px] text-[#a3a3a3]">http://<span className="text-white">localhost</span>:3000/manage</span>
        <svg viewBox="0 0 12 17" className="h-[17px] w-3"><path d="M6 0a6 6 0 0 0-6 6c0 4.500 6 11 6 11s6-6.500 6-11a6 6 0 0 0-6-6zm0 8a2 2 0 1 1 0-4 2 2 0 0 1 0 4z" fill="#c4c4c4" fillRule="evenodd" /></svg>
        <svg viewBox="0 0 18 18" className="mr-[13px] ml-[25px] size-[18px]"><path d="M9 1.5l2.200 5.200 5.600.5-4.200 3.700 1.200 5.500L9 13.500l-4.800 2.900 1.200-5.500L1.200 7.200l5.600-.5z" fill="none" stroke="#c4c4c4" strokeWidth="1.5" /></svg>
      </div>
      <svg viewBox="0 0 20 20" className="ml-[17px] size-5" fill="none" stroke="#111" strokeWidth="1"><path d="M1 0v19h18V0M1 3h18M1 6h18M5 15l5 3 5-3" /><circle cx="6" cy="10" r="3.800" /><circle cx="14" cy="10" r="3.800" /><path d="M9 15l1 2 1-2z" /></svg>
      <svg viewBox="0 0 20 16" className="ml-5 h-4 w-5"><defs><linearGradient id="red" x2="0" y2="1"><stop stopColor="#f24a4a" /><stop offset="1" stopColor="#b50000" /></linearGradient></defs><rect width="20" height="16" rx="5" fill="url(#red)" /><path d="M5 5l5 3-5 3zM10 5l5 3-5 3z" fill="#fff" /></svg>
      <svg viewBox="0 0 20 20" className="ml-5 size-5"><circle cx="10" cy="10" r="10" fill="#4d678f" /><path d="M7 4v10l2.500-2 1.500 3.500 2-1-1.500-3.300h3z" fill="#fff" /></svg>
      <svg viewBox="0 0 15 20" className="ml-[23px] h-5 w-[15px]"><path d="M1 2L5 1 7.500 0 10 1l4 1v6l1 2-3 3-4 6.500L8.500 14 2 13 0 9l1-1z" fill="#1f8378" /><path d="M2 6.500q5.500 2 11 0l-2 3H4z" fill="#fff" /><circle cx="7.500" cy="7.700" r="1.800" fill="#123" /></svg>
      <svg viewBox="2 1 21 21" className="ml-[23px] size-[18px]"><path d="M20.500 11H19V7a2 2 0 0 0-2-2h-4V3.500a2.500 2.500 0 0 0-5 0V5H4a2 2 0 0 0-2 2v3.800h1.500a2.700 2.700 0 0 1 0 5.400H2V20a2 2 0 0 0 2 2h3.800v-1.500a2.700 2.700 0 0 1 5.400 0V22H17a2 2 0 0 0 2-2v-4h1.500a2.500 2.500 0 0 0 0-5z" fill="#dedede" /></svg>
      <svg viewBox="0 0 28 28" className="ml-[17px] size-7"><clipPath id="face"><circle cx="14" cy="14" r="14" /></clipPath><g clipPath="url(#face)"><path d="M0 0h28v28H0z" fill="#3d6f86" /><path d="M0 0h12v10L0 16z" fill="#c4e1ea" /><path d="M15 0h13v15H18z" fill="#08316d" /><path d="M20 5l6 2-1 5-5-2z" fill="#1686d8" /><path d="M9 4h8v9H9z" fill="#171a20" /><path d="M11 6.500h4V11h-4z" fill="#b98674" /><path d="M8 13.500q5-3 9 0l1 10-9 2z" fill="#681d50" /><path d="M18 15l6 1v7l-6 3z" fill="#109c59" /><path d="M0 19l7 3v6H0zM9 25h9v3H9z" fill="#c8d8dc" /></g></svg>
      <svg viewBox="0 0 4 16" className="ml-6 h-4 w-1"><path d="M2 2h0M2 8h0M2 14h0" stroke="#e3e3e3" strokeWidth="4" strokeLinecap="round" /></svg>
    </div>
  );
}

function NavBar() {
  return (
    <nav className="flex h-[70px] items-center bg-[#212529] pt-0.5 pl-[15px] text-[19.5px] tracking-[-0.3px] text-white">
      <svg viewBox="0 0 28 25" className="mt-px h-[25px] w-7">
        <path d="M13 .4a1.500 1.500 0 0 1 2 0L20 4.700V2q0-.7.700-.7H24q.7 0 .7.700v6.800l3 2.600q.5.500 0 1l-.8.8q-.4.400-1 0l-.9-.7V23.500q0 1.500-1.500 1.500h-18Q4 25 4 23.500V12.500l-1.700.9q-.6.300-1-.1L.4 12.300q-.4-.5.100-1zM14 8.300a3.200 3.200 0 1 0 0 6.400 3.200 3.200 0 0 0 0-6.400zM8 21.900h12q0-5.400-4.200-5.400h-3.600Q8 16.500 8 21.900z" fill="#fff" fillRule="evenodd" />
      </svg>
      <a className="ml-[30px] w-[54px] whitespace-nowrap">Home</a>
      <a className="ml-5 w-[120px] whitespace-nowrap">Affected Data</a>
      <a className="ml-5 w-[71px] whitespace-nowrap">Manage</a>
      <a className="ml-5 whitespace-nowrap">Signout</a>
    </nav>
  );
}

export default function App() {
  return (
    <div className="flex h-[1031px] w-[1905px] flex-col overflow-hidden bg-[#e6cbe2] font-['Noto_Sans','Open_Sans',sans-serif]">
      <TabStrip />
      <Toolbar />
      <NavBar />
      <button className="mt-2.5 ml-[565px] h-12 w-[790px] shrink-0 rounded-[4px] bg-[#0dcaf0] pt-0.5 text-[19px] tracking-[-0.15px] text-black">Check affected user</button>
      <div className="relative mt-2.5 ml-[150px] h-[400px] w-[1500px] shrink-0 overflow-hidden">
        <MapCanvas />
        <div className="absolute top-3 right-3 flex size-[50px] items-center justify-center rounded-[2px] bg-white shadow-[0_1px_4px_rgba(0,0,0,0.3)]">
          <svg viewBox="0 0 22 22" className="size-[22px]"><path d="M1.2 7V1.2H7M15 1.2h5.800V7M20.800 15v5.800H15M7 20.800H1.200V15" fill="none" stroke="#666" strokeWidth="2.6" /></svg>
        </div>
        <div className="absolute right-3 bottom-[30px] flex h-[102px] w-[50px] flex-col items-center justify-between rounded-[2px] bg-white pt-[14px] pb-[14px] shadow-[0_1px_4px_rgba(0,0,0,0.3)]">
          <svg viewBox="0 0 22 22" className="size-[22px]"><path d="M11 0v22M0 11h22" stroke="#666" strokeWidth="4.5" /></svg>
          <div className="h-0.5 w-[37px] bg-[#e6e6e6]" />
          <svg viewBox="0 0 22 22" className="size-[22px]"><path d="M0 11h22" stroke="#666" strokeWidth="4.5" /></svg>
        </div>
        <div className="absolute right-0 bottom-0 flex h-[18px] w-[314px] items-center bg-[#f5f5f5]/75 pt-px pl-[7px] font-[Roboto] text-[12.5px] whitespace-nowrap text-black">
          <span className="w-[107px]">Map data ©2021</span>
          <span className="w-[88px]">Terms of Use</span>
          <span>Report a map error</span>
        </div>
        <div className="absolute top-28 left-[1188px] h-[274px] w-[250px] rounded-xl bg-[rgba(8,2,33,0.6)] px-[25px] pt-[27px] font-semibold text-[#f3e9e8]">
          <h1 className="text-[38.5px] leading-[48px] tracking-[-0.8px]">Flooded<br />Location</h1>
          <h3 className="mt-[9px] text-[28.5px] leading-9 tracking-[-1.15px] whitespace-nowrap">Ambari,<br />Assam 781316,<br />India</h3>
        </div>
      </div>
      <div className="mt-auto flex h-1 items-end bg-[#ccd6da]">
        <div className="ml-[61px] h-[3px] w-[428px] bg-white" />
        <div className="ml-[373px] h-1 w-14 bg-[#edf0f2]" />
        <div className="ml-0.5 h-1 w-[3px] bg-[#edf0f2]" />
      </div>
    </div>
  );
}
